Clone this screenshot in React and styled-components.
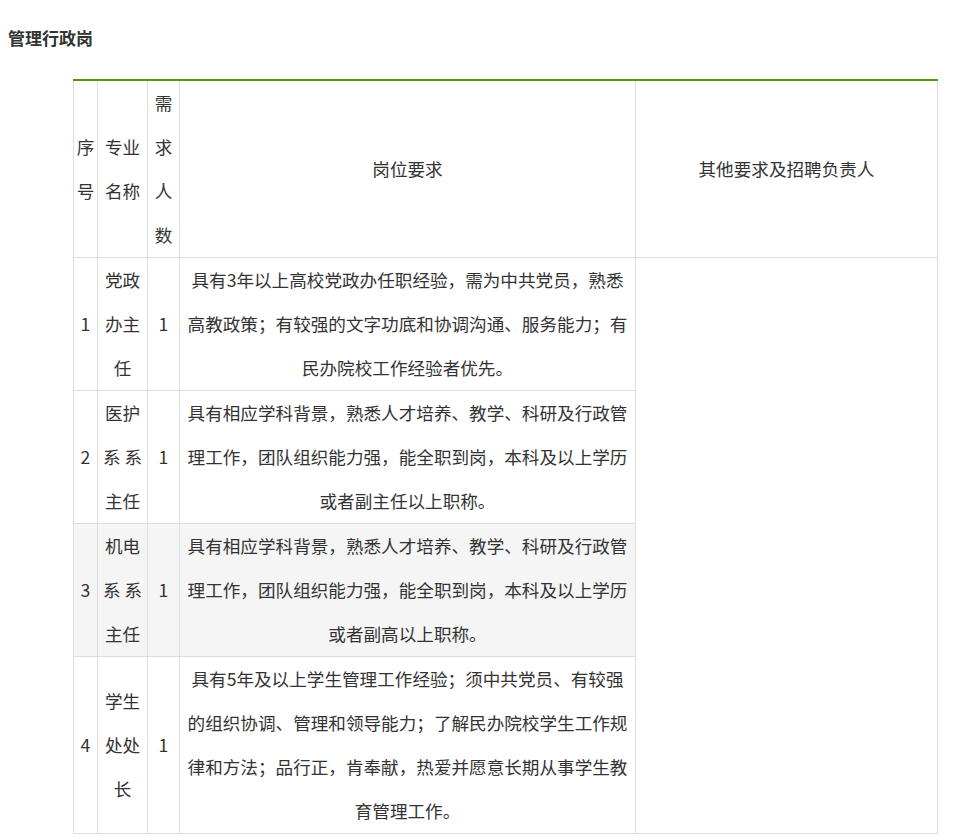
import React from 'react';
import styled, { createGlobalStyle } from 'styled-components';

const Global = createGlobalStyle`
  body { margin: 0; background: #fff; font-family: "Microsoft YaHei", "Noto Sans CJK SC", sans-serif; color: #333; }
`;

const Page = styled.div`
  padding: 27px 8px 0;
`;

const Title = styled.h3`
  margin: 0 0 30px;
  font-size: 17px;
  font-weight: bold;
  line-height: 22px;
  color: #333;
`;

const Table = styled.table`
  margin-left: 65px;
  width: 864px;
  table-layout: fixed;
  border-collapse: collapse;
  border-top: 2px solid #4a9a1a;
  font-size: 17.6px;
  line-height: 44px;
`;

const Cell = styled.td`
  border: 1px solid #ddd;
  padding: 0 ${p => (p.$wide ? '6px' : '2px')};
  text-align: center;
  vertical-align: middle;
  font-weight: normal;
`;

const Row = styled.tr`
  background: ${p => (p.$shade ? '#f5f5f5' : '#fff')};
`;

const rows = [
  ['1', '党政办主任', '1', '具有3年以上高校党政办任职经验，需为中共党员，熟悉高教政策；有较强的文字功底和协调沟通、服务能力；有民办院校工作经验者优先。'],
  ['2', '医护系 系主任', '1', '具有相应学科背景，熟悉人才培养、教学、科研及行政管理工作，团队组织能力强，能全职到岗，本科及以上学历或者副主任以上职称。'],
  ['3', '机电系 系主任', '1', '具有相应学科背景，熟悉人才培养、教学、科研及行政管理工作，团队组织能力强，能全职到岗，本科及以上学历或者副高以上职称。'],
  ['4', '学生处处长', '1', '具有5年及以上学生管理工作经验；须中共党员、有较强的组织协调、管理和领导能力；了解民办院校学生工作规律和方法；品行正，肯奉献，热爱并愿意长期从事学生教育管理工作。'],
];

export default function App() {
  return (
    <Page>
      <Global />
      <Title>管理行政岗</Title>
      <Table>
        <colgroup>
          <col style={{ width: 24 }} />
          <col style={{ width: 50 }} />
          <col style={{ width: 32 }} />
          <col style={{ width: 456 }} />
          <col style={{ width: 302 }} />
        </colgroup>
        <tbody>
          <Row>
            <Cell>序号</Cell>
            <Cell>专业名称</Cell>
            <Cell>需求人数</Cell>
            <Cell $wide>岗位要求</Cell>
            <Cell>其他要求及招聘负责人</Cell>
          </Row>
          {rows.map((r, i) => (
            <Row key={r[0]} $shade={i === 2}>
              <Cell>{r[0]}</Cell>
              <Cell>{r[1]}</Cell>
              <Cell>{r[2]}</Cell>
              <Cell $wide>{r[3]}</Cell>
              {i === 0 && <Cell rowSpan={4} style={{ background: '#fff' }} />}
            </Row>
          ))}
        </tbody>
      </Table>
    </Page>
  );
}
